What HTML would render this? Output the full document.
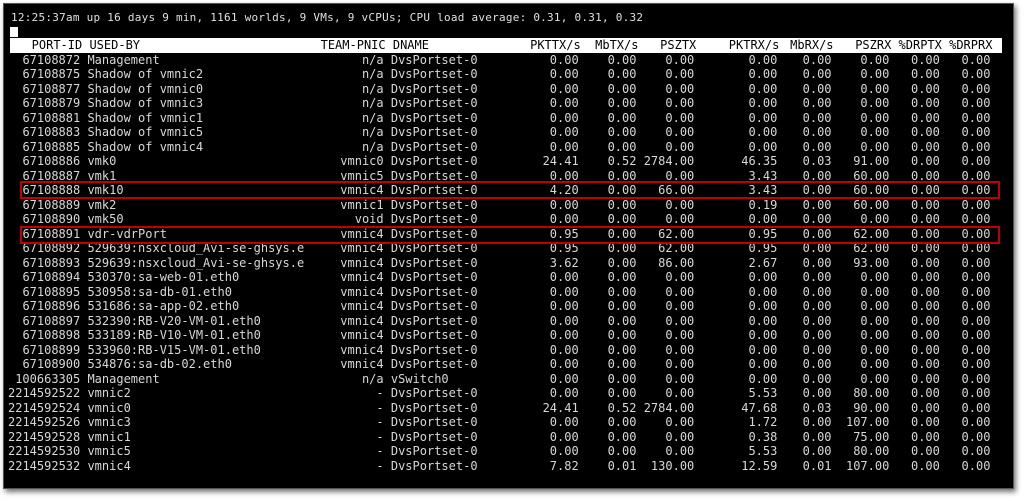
<!DOCTYPE html>
<html><head><meta charset="utf-8"><style>
html,body{margin:0;padding:0;background:#fff;width:1024px;height:501px;overflow:hidden}
#term{position:absolute;left:3px;top:3px;width:1011px;height:486px;background:#000;border:1px solid #555;box-shadow:2px 3px 5px rgba(0,0,0,.55);box-sizing:border-box}
.top{position:absolute;left:7px;top:7px;font:11px "DejaVu Sans Mono","Liberation Mono",monospace;letter-spacing:.25px;color:#e0e0e0;white-space:pre;line-height:14px}
.cur{position:absolute;left:6px;top:23px;width:8px;height:10px;background:#fff}
.tbl{position:absolute;left:4px;top:34px;font:12px "DejaVu Sans Mono","Liberation Mono",monospace;color:#d8d8d8}
.r{display:grid;grid-template-columns:10ch 1ch 31ch 10ch 1ch 18ch 8ch 8ch 8ch 11.5ch 7.5ch 8ch 7ch 7ch;height:14.5px;line-height:14.5px;white-space:pre}
.r span{overflow:visible}
.r span:nth-child(1),.r span:nth-child(4),.r span:nth-child(n+7){text-align:right}
.h{background:#fff;color:#000;width:992px;margin-left:2px;margin-right:0}
.h span:first-child{margin-left:-2px}
.box{position:absolute;left:16px;width:976px;height:14px;border:2px solid #c00000}
</style></head><body>
<div id="term">
<div class="top">12:25:37am up 16 days 9 min, 1161 worlds, 9 VMs, 9 vCPUs; CPU load average: 0.31, 0.31, 0.32</div>
<div class="cur"></div>
<div class="tbl">
<div class="r h"><span>PORT-ID</span><span></span><span>USED-BY</span><span>TEAM-PNIC</span><span></span><span>DNAME</span><span>PKTTX/s</span><span>MbTX/s</span><span>PSZTX</span><span>PKTRX/s</span><span>MbRX/s</span><span>PSZRX</span><span>%DRPTX</span><span>%DRPRX</span></div>
<div class="r"><span>67108872</span><span></span><span>Management</span><span>n/a</span><span></span><span>DvsPortset-0</span><span>0.00</span><span>0.00</span><span>0.00</span><span>0.00</span><span>0.00</span><span>0.00</span><span>0.00</span><span>0.00</span></div>
<div class="r"><span>67108875</span><span></span><span>Shadow of vmnic2</span><span>n/a</span><span></span><span>DvsPortset-0</span><span>0.00</span><span>0.00</span><span>0.00</span><span>0.00</span><span>0.00</span><span>0.00</span><span>0.00</span><span>0.00</span></div>
<div class="r"><span>67108877</span><span></span><span>Shadow of vmnic0</span><span>n/a</span><span></span><span>DvsPortset-0</span><span>0.00</span><span>0.00</span><span>0.00</span><span>0.00</span><span>0.00</span><span>0.00</span><span>0.00</span><span>0.00</span></div>
<div class="r"><span>67108879</span><span></span><span>Shadow of vmnic3</span><span>n/a</span><span></span><span>DvsPortset-0</span><span>0.00</span><span>0.00</span><span>0.00</span><span>0.00</span><span>0.00</span><span>0.00</span><span>0.00</span><span>0.00</span></div>
<div class="r"><span>67108881</span><span></span><span>Shadow of vmnic1</span><span>n/a</span><span></span><span>DvsPortset-0</span><span>0.00</span><span>0.00</span><span>0.00</span><span>0.00</span><span>0.00</span><span>0.00</span><span>0.00</span><span>0.00</span></div>
<div class="r"><span>67108883</span><span></span><span>Shadow of vmnic5</span><span>n/a</span><span></span><span>DvsPortset-0</span><span>0.00</span><span>0.00</span><span>0.00</span><span>0.00</span><span>0.00</span><span>0.00</span><span>0.00</span><span>0.00</span></div>
<div class="r"><span>67108885</span><span></span><span>Shadow of vmnic4</span><span>n/a</span><span></span><span>DvsPortset-0</span><span>0.00</span><span>0.00</span><span>0.00</span><span>0.00</span><span>0.00</span><span>0.00</span><span>0.00</span><span>0.00</span></div>
<div class="r"><span>67108886</span><span></span><span>vmk0</span><span>vmnic0</span><span></span><span>DvsPortset-0</span><span>24.41</span><span>0.52</span><span>2784.00</span><span>46.35</span><span>0.03</span><span>91.00</span><span>0.00</span><span>0.00</span></div>
<div class="r"><span>67108887</span><span></span><span>vmk1</span><span>vmnic5</span><span></span><span>DvsPortset-0</span><span>0.00</span><span>0.00</span><span>0.00</span><span>3.43</span><span>0.00</span><span>60.00</span><span>0.00</span><span>0.00</span></div>
<div class="r"><span>67108888</span><span></span><span>vmk10</span><span>vmnic4</span><span></span><span>DvsPortset-0</span><span>4.20</span><span>0.00</span><span>66.00</span><span>3.43</span><span>0.00</span><span>60.00</span><span>0.00</span><span>0.00</span></div>
<div class="r"><span>67108889</span><span></span><span>vmk2</span><span>vmnic1</span><span></span><span>DvsPortset-0</span><span>0.00</span><span>0.00</span><span>0.00</span><span>0.19</span><span>0.00</span><span>60.00</span><span>0.00</span><span>0.00</span></div>
<div class="r"><span>67108890</span><span></span><span>vmk50</span><span>void</span><span></span><span>DvsPortset-0</span><span>0.00</span><span>0.00</span><span>0.00</span><span>0.00</span><span>0.00</span><span>0.00</span><span>0.00</span><span>0.00</span></div>
<div class="r"><span>67108891</span><span></span><span>vdr-vdrPort</span><span>vmnic4</span><span></span><span>DvsPortset-0</span><span>0.95</span><span>0.00</span><span>62.00</span><span>0.95</span><span>0.00</span><span>62.00</span><span>0.00</span><span>0.00</span></div>
<div class="r"><span>67108892</span><span></span><span>529639:nsxcloud_Avi-se-ghsys.e</span><span>vmnic4</span><span></span><span>DvsPortset-0</span><span>0.95</span><span>0.00</span><span>62.00</span><span>0.95</span><span>0.00</span><span>62.00</span><span>0.00</span><span>0.00</span></div>
<div class="r"><span>67108893</span><span></span><span>529639:nsxcloud_Avi-se-ghsys.e</span><span>vmnic4</span><span></span><span>DvsPortset-0</span><span>3.62</span><span>0.00</span><span>86.00</span><span>2.67</span><span>0.00</span><span>93.00</span><span>0.00</span><span>0.00</span></div>
<div class="r"><span>67108894</span><span></span><span>530370:sa-web-01.eth0</span><span>vmnic4</span><span></span><span>DvsPortset-0</span><span>0.00</span><span>0.00</span><span>0.00</span><span>0.00</span><span>0.00</span><span>0.00</span><span>0.00</span><span>0.00</span></div>
<div class="r"><span>67108895</span><span></span><span>530958:sa-db-01.eth0</span><span>vmnic4</span><span></span><span>DvsPortset-0</span><span>0.00</span><span>0.00</span><span>0.00</span><span>0.00</span><span>0.00</span><span>0.00</span><span>0.00</span><span>0.00</span></div>
<div class="r"><span>67108896</span><span></span><span>531686:sa-app-02.eth0</span><span>vmnic4</span><span></span><span>DvsPortset-0</span><span>0.00</span><span>0.00</span><span>0.00</span><span>0.00</span><span>0.00</span><span>0.00</span><span>0.00</span><span>0.00</span></div>
<div class="r"><span>67108897</span><span></span><span>532390:RB-V20-VM-01.eth0</span><span>vmnic4</span><span></span><span>DvsPortset-0</span><span>0.00</span><span>0.00</span><span>0.00</span><span>0.00</span><span>0.00</span><span>0.00</span><span>0.00</span><span>0.00</span></div>
<div class="r"><span>67108898</span><span></span><span>533189:RB-V10-VM-01.eth0</span><span>vmnic4</span><span></span><span>DvsPortset-0</span><span>0.00</span><span>0.00</span><span>0.00</span><span>0.00</span><span>0.00</span><span>0.00</span><span>0.00</span><span>0.00</span></div>
<div class="r"><span>67108899</span><span></span><span>533960:RB-V15-VM-01.eth0</span><span>vmnic4</span><span></span><span>DvsPortset-0</span><span>0.00</span><span>0.00</span><span>0.00</span><span>0.00</span><span>0.00</span><span>0.00</span><span>0.00</span><span>0.00</span></div>
<div class="r"><span>67108900</span><span></span><span>534876:sa-db-02.eth0</span><span>vmnic4</span><span></span><span>DvsPortset-0</span><span>0.00</span><span>0.00</span><span>0.00</span><span>0.00</span><span>0.00</span><span>0.00</span><span>0.00</span><span>0.00</span></div>
<div class="r"><span>100663305</span><span></span><span>Management</span><span>n/a</span><span></span><span>vSwitch0</span><span>0.00</span><span>0.00</span><span>0.00</span><span>0.00</span><span>0.00</span><span>0.00</span><span>0.00</span><span>0.00</span></div>
<div class="r"><span>2214592522</span><span></span><span>vmnic2</span><span>-</span><span></span><span>DvsPortset-0</span><span>0.00</span><span>0.00</span><span>0.00</span><span>5.53</span><span>0.00</span><span>80.00</span><span>0.00</span><span>0.00</span></div>
<div class="r"><span>2214592524</span><span></span><span>vmnic0</span><span>-</span><span></span><span>DvsPortset-0</span><span>24.41</span><span>0.52</span><span>2784.00</span><span>47.68</span><span>0.03</span><span>90.00</span><span>0.00</span><span>0.00</span></div>
<div class="r"><span>2214592526</span><span></span><span>vmnic3</span><span>-</span><span></span><span>DvsPortset-0</span><span>0.00</span><span>0.00</span><span>0.00</span><span>1.72</span><span>0.00</span><span>107.00</span><span>0.00</span><span>0.00</span></div>
<div class="r"><span>2214592528</span><span></span><span>vmnic1</span><span>-</span><span></span><span>DvsPortset-0</span><span>0.00</span><span>0.00</span><span>0.00</span><span>0.38</span><span>0.00</span><span>75.00</span><span>0.00</span><span>0.00</span></div>
<div class="r"><span>2214592530</span><span></span><span>vmnic5</span><span>-</span><span></span><span>DvsPortset-0</span><span>0.00</span><span>0.00</span><span>0.00</span><span>5.53</span><span>0.00</span><span>80.00</span><span>0.00</span><span>0.00</span></div>
<div class="r"><span>2214592532</span><span></span><span>vmnic4</span><span>-</span><span></span><span>DvsPortset-0</span><span>7.82</span><span>0.01</span><span>130.00</span><span>12.59</span><span>0.01</span><span>107.00</span><span>0.00</span><span>0.00</span></div>
</div>
<div class="box" style="top:177px"></div>
<div class="box" style="top:222px"></div>
</div>
</body></html>
